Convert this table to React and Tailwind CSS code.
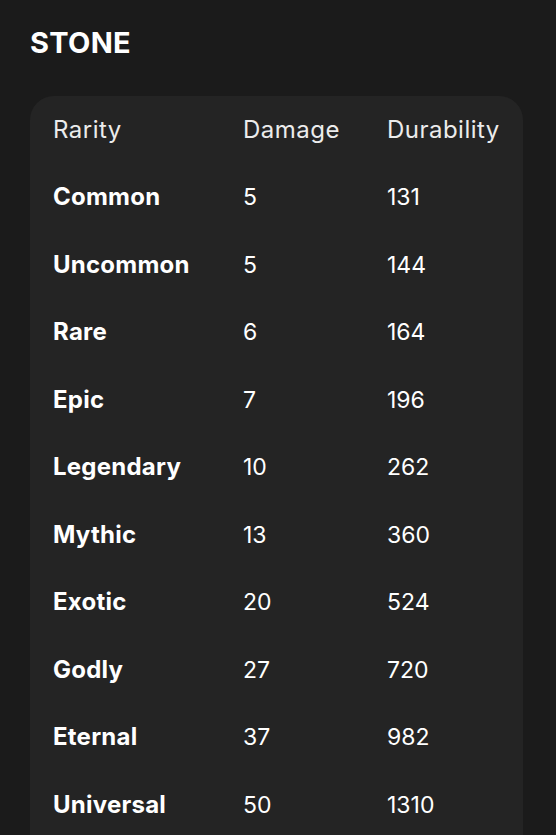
import React from 'react';

const rows = [
    ['Common', 5, 131],
    ['Uncommon', 5, 144],
    ['Rare', 6, 164],
    ['Epic', 7, 196],
    ['Legendary', 10, 262],
    ['Mythic', 13, 360],
    ['Exotic', 20, 524],
    ['Godly', 27, 720],
    ['Eternal', 37, 982],
    ['Universal', 50, 1310],
];

export default function App() {
    return (
        <div className="min-h-screen bg-[#1b1b1b] text-white overflow-hidden" style={{ fontFamily: 'Inter, "Noto Sans", sans-serif' }}>
            <h1 className="pl-[30px] pt-[26px] h-[96px] text-[29px] leading-[34px] font-bold tracking-[0.01em]">STONE</h1>

            <div className="ml-[30px] mr-[33px] bg-[#242424] rounded-[24px] px-[23px] pb-8">
                <div className="grid grid-cols-[190px_144px_1fr] h-[67.5px] items-center text-[24px] tracking-[0.02em] text-[#ececec]">
                    <span>Rarity</span>
                    <span>Damage</span>
                    <span>Durability</span>
                </div>
                {rows.map(([name, dmg, dur]) => (
                    <div key={name} className="grid grid-cols-[190px_144px_1fr] h-[67.5px] items-center text-[23px]">
                        <span className="font-bold text-[24px] tracking-[0.01em]">{name}</span>
                        <span>{dmg}</span>
                        <span>{dur}</span>
                    </div>
                ))}
            </div>
        </div>
    );
}
